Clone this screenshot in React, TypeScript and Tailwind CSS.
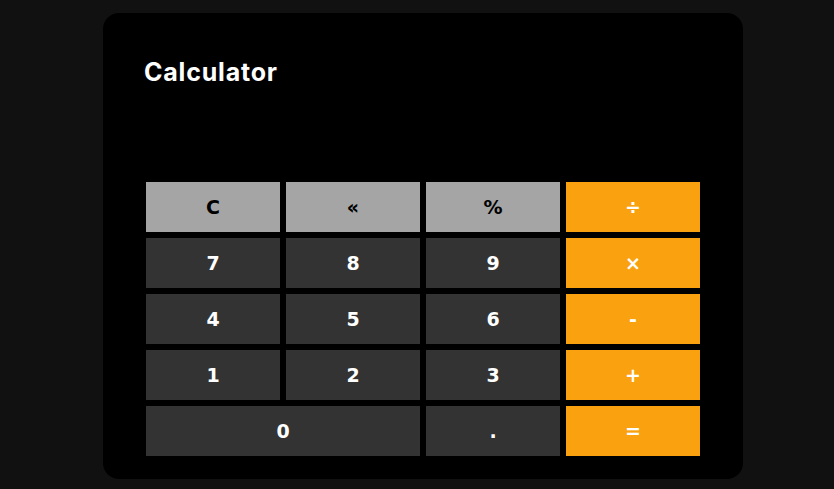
import React from 'react';

type Key = {
  label: string;
  kind: 'fn' | 'num' | 'op';
  wide?: boolean;
};

const KEYS: Key[] = [
  { label: 'C', kind: 'fn' },
  { label: '«', kind: 'fn' },
  { label: '%', kind: 'fn' },
  { label: '÷', kind: 'op' },
  { label: '7', kind: 'num' },
  { label: '8', kind: 'num' },
  { label: '9', kind: 'num' },
  { label: '×', kind: 'op' },
  { label: '4', kind: 'num' },
  { label: '5', kind: 'num' },
  { label: '6', kind: 'num' },
  { label: '-', kind: 'op' },
  { label: '1', kind: 'num' },
  { label: '2', kind: 'num' },
  { label: '3', kind: 'num' },
  { label: '+', kind: 'op' },
  { label: '0', kind: 'num', wide: true },
  { label: '.', kind: 'num' },
  { label: '=', kind: 'op' },
];

const kindClass = {
  fn: 'bg-[#a5a5a5] text-black',
  num: 'bg-[#333333] text-white',
  op: 'bg-[#f9a10e] text-white',
};

export default function App() {
  return (
    <div className="min-h-[489px] bg-[#111111] pl-[103px] pt-[13px]">
      <div className="w-[640px] h-[466px] bg-black rounded-[16px] px-[43px] pt-[43px]">
        <h1 className="-ml-[2px] text-white text-[25px] leading-[32px] font-bold font-['Inter',sans-serif] tracking-[0.8px]">
          Calculator
        </h1>

        <div className="mt-[94px] grid grid-cols-4 gap-[6px]">
          {KEYS.map((k) => (
            <button
              key={k.label}
              type="button"
              className={`h-[50px] flex items-center justify-center font-bold text-[19px] font-['DejaVu_Sans',sans-serif] ${kindClass[k.kind]} ${k.wide ? 'col-span-2' : ''}`}
            >
              {k.label}
            </button>
          ))}
        </div>
      </div>
    </div>
  );
}
